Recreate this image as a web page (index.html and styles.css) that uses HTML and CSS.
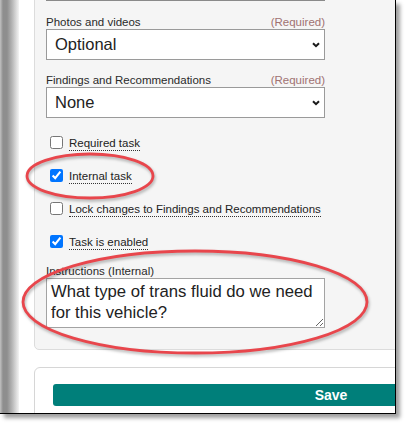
FILE: index.html
```html
<!DOCTYPE html>
<html>
<head>
<meta charset="utf-8">
<link rel="stylesheet" href="styles.css">
</head>
<body>
<div class="shot">
  <div class="frame">
    <div class="backdrop"></div>
    <div class="dialog">
      <div class="panel">
        <div class="prev-field"></div>
        <div class="field">
          <div class="field-head"><span class="label">Photos and videos</span><span class="req">(Required)</span></div>
          <div class="select"><span>Optional</span><svg class="chev" width="8" height="6" viewBox="0 0 8 6"><path d="M1 1.2 L4 4.2 L7 1.2" fill="none" stroke="#1a1a1a" stroke-width="2"/></svg></div>
        </div>
        <div class="field">
          <div class="field-head"><span class="label">Findings and Recommendations</span><span class="req">(Required)</span></div>
          <div class="select"><span>None</span><svg class="chev" width="8" height="6" viewBox="0 0 8 6"><path d="M1 1.2 L4 4.2 L7 1.2" fill="none" stroke="#1a1a1a" stroke-width="2"/></svg></div>
        </div>
        <div class="checks">
          <label class="check"><input type="checkbox"><span class="check-text">Required task</span></label>
          <label class="check"><input type="checkbox" checked><span class="check-text">Internal task</span></label>
          <label class="check"><input type="checkbox"><span class="check-text">Lock changes to Findings and Recommendations</span></label>
          <label class="check"><input type="checkbox" checked><span class="check-text">Task is enabled</span></label>
        </div>
        <div class="field instr">
          <div class="label instr-label">Instructions (Internal)</div>
          <textarea class="textarea">What type of trans fluid do we need for this vehicle?</textarea>
        </div>
      </div>
      <div class="card">
        <button class="save">Save</button>
      </div>
    </div>
  </div>
  <svg class="marks" width="408" height="425" viewBox="0 0 408 425">
    <ellipse cx="90" cy="176" rx="63" ry="22" fill="none" stroke="#e8464c" stroke-width="2.8"/>
    <ellipse cx="195" cy="302" rx="172" ry="51" fill="none" stroke="#e8464c" stroke-width="2.8"/>
  </svg>
</div>
</body>
</html>
```

FILE: styles.css
```css
* { box-sizing: border-box; }
html, body { margin: 0; padding: 0; background: #fff; }
body { width: 408px; height: 425px; overflow: hidden; font-family: "Liberation Sans", Arial, sans-serif; color: #222; }

.shot { position: relative; width: 408px; height: 425px; }

.frame {
  width: 396px;
  height: 414px;
  display: flex;
  overflow: hidden;
  border-right: 1px solid #000;
  border-bottom: 1px solid #000;
  box-shadow: 4px 4px 4px rgba(0,0,0,0.38);
  background: #fff;
}

.backdrop {
  width: 19px;
  flex: none;
  background: linear-gradient(to right, #c2c2c2 0px, #8e8e8e 3px, #8e8e8e 7px, #b5b5b5 12px, #e2e2e2 17px, #f4f4f4 19px);
}

.dialog {
  flex: 1;
  min-width: 0;
  background: #fff;
  border-bottom-left-radius: 5px;
  padding-left: 15px;
  display: flex;
  flex-direction: column;
}

.panel {
  width: 420px;
  flex: none;
  margin-top: -40px;
  padding: 9px 0 21px 11px;
  background: #f5f5f5;
  border: 1px solid #dcdcdc;
  border-radius: 5px;
}

.prev-field {
  width: 279px;
  height: 31px;
  border: 1px solid #8a8a8a;
  background: #fff;
}

.field { width: 279px; margin-top: 15px; }
.field + .field { margin-top: 14px; }

.field-head {
  display: flex;
  justify-content: space-between;
  font-size: 11.5px;
  line-height: 13px;
}
.label { color: #2a2a2a; }
.req { color: #a07272; }

.select {
  height: 31px;
  border: 1px solid #9a9a9a;
  background: #fff;
  display: flex;
  align-items: center;
  justify-content: space-between;
  padding: 0 4px 0 8px;
  font-size: 16.5px;
  color: #222;
}
.chev { display: block; }

.checks { margin-top: 8px; display: flex; flex-direction: column; }
.check {
  height: 33px;
  display: flex;
  align-items: center;
  font-size: 11.5px;
}
.check input {
  width: 13px;
  height: 13px;
  margin: 0 6px 0 4px;
  accent-color: #0075ff;
}
.check-text {
  line-height: 14px;
  padding-top: 2px;
  border-bottom: 1px dotted #333;
  color: #222;
}

.field.instr { margin-top: 7px; }
.instr-label { font-size: 11.5px; line-height: 13px; }

.textarea {
  display: block;
  width: 279px;
  height: 50px;
  margin: 0;
  padding: 2px 4px;
  border: 1px solid #a3a3a3;
  border-radius: 0;
  font-family: "Liberation Sans", Arial, sans-serif;
  font-size: 16.7px;
  line-height: 21px;
  color: #222;
  background: #fff;
  resize: both;
  overflow: hidden;
}

.card {
  width: 620px;
  flex: none;
  margin-top: 17px;
  padding: 16px 0 40px 18px;
  border: 1px solid #d6d6d6;
  border-radius: 6px;
  background: #fff;
}

.save {
  display: block;
  width: 556px;
  height: 22px;
  border: none;
  border-radius: 3px;
  background: #007f7a;
  color: #fff;
  font-family: "Liberation Sans", Arial, sans-serif;
  font-weight: bold;
  font-size: 14px;
  padding: 0;
}

.marks {
  position: absolute;
  left: 0;
  top: 0;
  pointer-events: none;
  filter: drop-shadow(1px 2px 1.5px rgba(0,0,0,0.3));
}
```
